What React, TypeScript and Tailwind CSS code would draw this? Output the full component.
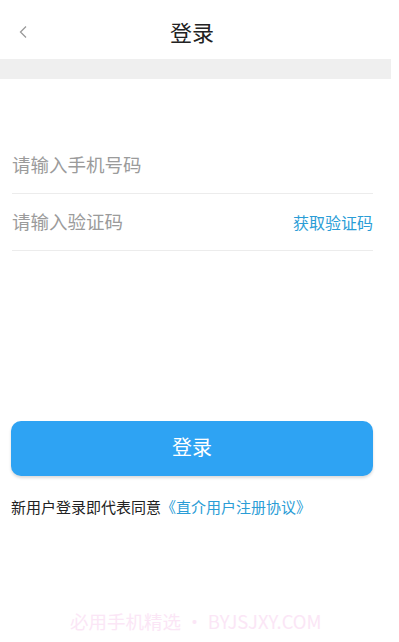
export default function App() {
  return (
    <div
      className="relative h-[642px] w-[399px] bg-white"
      style={{ fontFamily: '"Noto Sans CJK SC", "Noto Sans", sans-serif' }}
    >
      <div className="w-[391px]">
        {/* Header */}
        <div className="relative flex h-[59px] items-center justify-center">
          <svg
            className="absolute left-[18px] top-[25px]"
            width="10"
            height="14"
            viewBox="0 0 10 14"
            fill="none"
          >
            <path d="M8 1.5L2.5 7L8 12.5" stroke="#9a9a9a" strokeWidth="1.3" />
          </svg>
          <span className="mr-[7px] mt-[3px] text-[22px] leading-none text-[#222]">登录</span>
        </div>
        <div className="h-[20px] bg-[#efefef]" />
      </div>

      {/* Form */}
      <div className="mt-[59px] ml-[12px] w-[361px]">
        <div className="flex h-[56px] items-center border-b border-[#ececec] pb-[1px]">
          <span className="text-[18.5px] text-[#9b9b9b]">请输入手机号码</span>
        </div>
        <div className="flex h-[57px] items-center justify-between border-b border-[#ececec]">
          <span className="text-[18.5px] text-[#9b9b9b]">请输入验证码</span>
          <span className="text-[16px] text-[#2b9dd6]">获取验证码</span>
        </div>
      </div>

      <div className="mt-[170px] ml-[11px] w-[362px]">
        <button className="flex h-[55px] w-full items-center justify-center rounded-[10px] bg-[#2ea3f3] pb-[3px] text-[20px] text-white shadow-[0_2px_3px_rgba(0,0,0,0.15)]">
          登录
        </button>
        <div className="mt-[20px] text-[15px] text-[#222]">
          新用户登录即代表同意<span className="text-[#2b9dd6]">《直介用户注册协议》</span>
        </div>
      </div>

      <div className="absolute left-[70px] top-[608px] text-[18.5px] text-[#fbe6f6]">
        必用手机精选 • BYJSJXY.COM
      </div>
    </div>
  );
}
